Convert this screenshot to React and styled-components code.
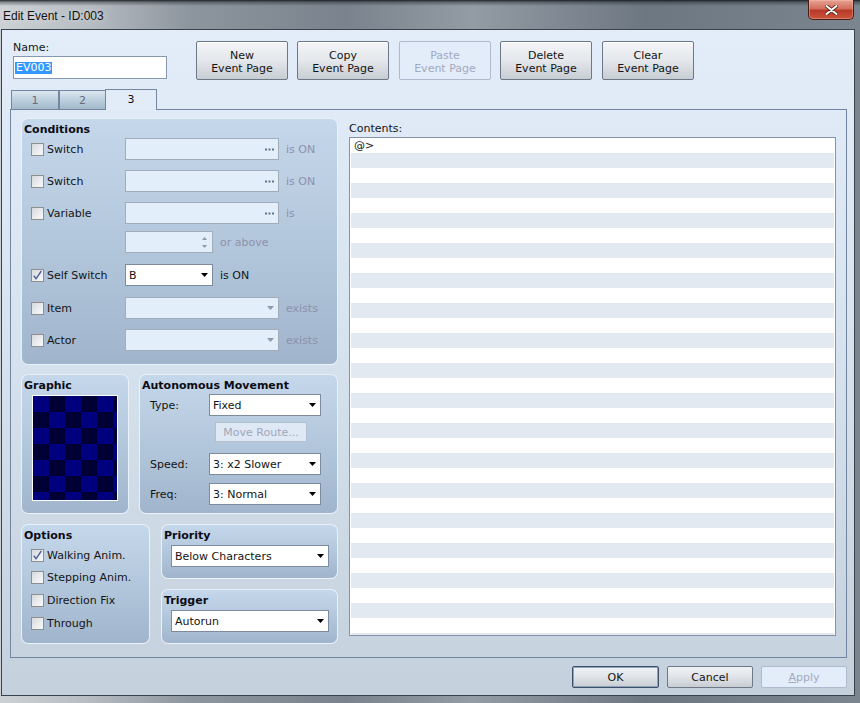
import styled, { createGlobalStyle } from "styled-components";

const GlobalStyle = createGlobalStyle`
  html, body { margin: 0; padding: 0; }
  body {
    font-family: "DejaVu Sans", Verdana, sans-serif;
    font-size: 11px;
    color: #141414;
  }
  * { box-sizing: border-box; }
`;

const Window = styled.div`
  width: 860px;
  height: 703px;
  display: flex;
  flex-direction: column;
  overflow: hidden;
  background:
    linear-gradient(180deg, rgba(18, 22, 26, 0.9) 0, rgba(30, 36, 42, 0.45) 2px, rgba(0, 0, 0, 0) 6px),
    linear-gradient(90deg, #cdd1d5 0%, #b7bdc3 10%, #8d959e 22%, #7a838d 40%, #939ba4 55%, #6d7782 75%, #7b8590 100%);
`;

const TitleBar = styled.div`
  height: 29px;
  flex: none;
  display: flex;
  justify-content: space-between;
  align-items: flex-start;
`;

const Caption = styled.div`
  font-family: "Liberation Sans", Arial, sans-serif;
  font-size: 12px;
  line-height: 14px;
  color: #121212;
  padding: 9px 0 0 3px;
  text-shadow: 0 0 6px rgba(255, 255, 255, 0.6);
`;

const CloseButton = styled.div`
  width: 46px;
  height: 20px;
  margin-right: 6px;
  display: flex;
  align-items: center;
  justify-content: center;
  border: 1px solid #4a1d16;
  border-top: none;
  border-radius: 0 0 5px 5px;
  background: linear-gradient(180deg, #e7a393 0%, #d36e5c 45%, #b93a29 55%, #c8553c 100%);
  box-shadow: inset 0 0 0 1px rgba(255, 200, 190, 0.35);
`;

const Client = styled.div`
  flex: 1;
  margin: 0 5px 7px 1px;
  border: 1px solid #3a424c;
  background: linear-gradient(180deg, #e2edf9 0%, #d7e3ef 45%, #c4d0dc 100%);
  padding: 0 7px 0 8px;
  display: flex;
  flex-direction: column;
`;

const TopRow = styled.div`
  margin-top: 11px;
  padding-left: 3px;
  height: 39px;
  display: flex;
  align-items: flex-start;
`;

const NameBlock = styled.div`
  width: 154px;
  display: flex;
  flex-direction: column;
`;

const NameLabel = styled.div`
  line-height: 13px;
  margin-bottom: 2px;
`;

const NameInput = styled.div`
  height: 23px;
  border: 1px solid #8798ae;
  background: #fff;
  padding-left: 1px;
  display: flex;
  align-items: center;
`;

const Selected = styled.span`
  background: #3399ff;
  color: #fff;
  line-height: 12px;
  padding: 0 1px;
`;

const PageButtons = styled.div`
  margin-left: 29px;
  display: flex;
  gap: 9px;
`;

const PageButton = styled.div`
  width: 92px;
  height: 39px;
  display: flex;
  align-items: center;
  justify-content: center;
  text-align: center;
  line-height: 13px;
  border-radius: 2px;
  border: 1px solid ${(p) => (p.$disabled ? "#aebbcc" : "#6c7888")};
  background: ${(p) =>
    p.$disabled
      ? "#e2edf9"
      : "linear-gradient(180deg, #f3f5f7 0%, #e4e7eb 50%, #c8cdd3 100%)"};
  color: ${(p) => (p.$disabled ? "#a3a8c2" : "#141414")};
  box-shadow: ${(p) => (p.$disabled ? "none" : "inset 0 1px 0 #fff")};
  padding-top: 3px;

  &:nth-child(odd):not(:first-child) {
    margin-left: 1px;
  }
`;

const TabBar = styled.div`
  margin-top: 9px;
  height: 20px;
  padding-left: 1px;
  display: flex;
  align-items: flex-end;
  position: relative;
  z-index: 2;
`;

const Tab = styled.div`
  width: ${(p) => p.$w}px;
  height: ${(p) => (p.$active ? 21 : 19)}px;
  margin-bottom: ${(p) => (p.$active ? -1 : 0)}px;
  margin-left: ${(p) => (p.$active ? -1 : 0)}px;
  border: 1px solid #7487a2;
  border-bottom: none;
  display: flex;
  align-items: center;
  justify-content: center;
  padding-bottom: ${(p) => (p.$active ? 1 : 0)}px;
  color: ${(p) => (p.$active ? "#111" : "#6b6b7c")};
  background: ${(p) =>
    p.$active ? "#e1ecf8" : "linear-gradient(180deg, #dce7ef 0%, #bccfdd 50%, #a3bacb 100%)"};
`;

const TabPanel = styled.div`
  height: 549px;
  border: 1px solid #7184a0;
  padding: 8px 10px 0 10px;
  display: flex;
  gap: 11px;
  position: relative;
  z-index: 1;
`;

const LeftCol = styled.div`
  width: 317px;
  display: flex;
  flex-direction: column;
`;

const GroupRow = styled.div`
  display: flex;
  gap: ${(p) => p.$gap}px;
  margin-top: ${(p) => p.$mt}px;
`;

const Stack = styled.div`
  display: flex;
  flex-direction: column;
  gap: 10px;
`;

const Group = styled.div`
  width: ${(p) => p.$w}px;
  height: ${(p) => p.$h}px;
  border: 1px solid rgba(238, 245, 252, 0.9);
  border-radius: 7px;
  background: linear-gradient(180deg, #c5d7ea 0%, #b3c7dc 50%, #a0b5cc 100%);
  padding: 4px 0 0 2px;
  display: flex;
  flex-direction: column;
`;

const GroupTitle = styled.div`
  font-weight: bold;
  line-height: 13px;
  color: #0c0c14;
`;

const Row = styled.div`
  display: flex;
  align-items: center;
  height: ${(p) => p.$h || 22}px;
  margin-top: ${(p) => p.$mt || 0}px;
  padding-left: ${(p) => (p.$pl === undefined ? 7 : p.$pl)}px;
`;

const CheckLabel = styled.div`
  width: ${(p) => p.$w || 94}px;
  flex: none;
  display: flex;
  align-items: center;
  gap: 3px;
`;

const Box = styled.div`
  width: 13px;
  height: 13px;
  flex: none;
  border: 1px solid #8e8e8e;
  background: linear-gradient(135deg, #d6d9dc 0%, #eceef0 60%, #f7f8f9 100%);
  display: flex;
  align-items: center;
  justify-content: center;
`;

const FieldLabel = styled.div`
  width: ${(p) => p.$w}px;
  flex: none;
`;

const Field = styled.div`
  width: ${(p) => p.$w}px;
  height: ${(p) => p.$h || 22}px;
  flex: none;
  display: flex;
  align-items: center;
  justify-content: space-between;
  padding: 0 4px 0 3px;
  border: 1px solid ${(p) => (p.$disabled ? "#a3adba" : "#7d8b9d")};
  background: ${(p) => (p.$disabled ? "#e2eefa" : "#fff")};
  color: #141414;
`;

const Suffix = styled.span`
  margin-left: 7px;
  color: ${(p) => (p.$disabled ? "#8f90ad" : "#141414")};
`;

const SpinArrows = styled.div`
  display: flex;
  flex-direction: column;
  gap: 5px;
  margin-right: 1px;
`;

const MoveRouteButton = styled.div`
  width: 92px;
  height: 20px;
  margin-left: 6px;
  display: flex;
  align-items: center;
  justify-content: center;
  border: 1px solid #b1bfd0;
  background: #dfe9f5;
  color: #9ea7ba;
`;

const Picture = styled.div`
  width: 86px;
  height: 106px;
  margin: 3px 0 0 8px;
  border: 1px solid #fff;
  background: repeating-conic-gradient(#000034 0 25%, #00007f 0 50%) 0 0 / 32px 32px;
`;

const RightCol = styled.div`
  flex: 1;
  display: flex;
  flex-direction: column;
  padding-top: 4px;
`;

const ContentsLabel = styled.div`
  line-height: 13px;
  margin-bottom: 2px;
`;

const ContentsBox = styled.div`
  height: 499px;
  border: 1px solid #8493a8;
  background: #fff;
  padding: 0 1px;
  overflow: hidden;
`;

const Line = styled.div`
  height: 15px;
  line-height: 15px;
  padding-left: 3px;
  background: ${(p) => (p.$alt ? "#e2e9f0" : "#fff")};
`;

const Footer = styled.div`
  margin-top: 8px;
  display: flex;
  justify-content: flex-end;
  gap: 8px;
`;

const DialogButton = styled.div`
  width: ${(p) => p.$w}px;
  height: 22px;
  display: flex;
  align-items: center;
  justify-content: center;
  border-radius: 2px;
  border: 1px solid ${(p) => (p.$default ? "#3c4e68" : p.$disabled ? "#aebbcc" : "#6c7888")};
  background: ${(p) =>
    p.$disabled ? "#e2edf9" : "linear-gradient(180deg, #f0f2f5 0%, #e0e4e8 50%, #c8cdd3 100%)"};
  color: ${(p) => (p.$disabled ? "#a3a8c2" : "#141414")};
  box-shadow: ${(p) => (p.$default ? "inset 0 0 0 1px #8ea3bc" : "none")};

  u {
    text-decoration: underline;
  }
`;

function Check({ checked }) {
  return (
    <Box>
      {checked && (
        <svg width="11" height="11" viewBox="0 0 11 11">
          <path d="M1.8 5.8 L4 8.8 L9.3 1" fill="none" stroke="#52649a" strokeWidth="1.5" />
        </svg>
      )}
    </Box>
  );
}

function DownArrow({ color }) {
  return (
    <svg width="7" height="4" viewBox="0 0 7 4">
      <path d="M0 0H7L3.5 4Z" fill={color} />
    </svg>
  );
}

function Dots() {
  return (
    <svg width="9" height="3" viewBox="0 0 9 3">
      <rect x="0" y="0.5" width="2" height="2" fill="#66728a" />
      <rect x="3.5" y="0.5" width="2" height="2" fill="#66728a" />
      <rect x="7" y="0.5" width="2" height="2" fill="#66728a" />
    </svg>
  );
}

function Select({ w, value, disabled }) {
  return (
    <Field $w={w} $disabled={disabled}>
      <span>{value}</span>
      <DownArrow color={disabled ? "#8e99ad" : "#000"} />
    </Field>
  );
}

const pageButtons = [
  ["New", false],
  ["Copy", false],
  ["Paste", true],
  ["Delete", false],
  ["Clear", false],
];

const options = [
  ["Walking Anim.", true],
  ["Stepping Anim.", false],
  ["Direction Fix", false],
  ["Through", false],
];

export default function App() {
  const lines = Array.from({ length: 34 }, (_, i) => i);

  return (
    <>
      <GlobalStyle />
      <Window>
        <TitleBar>
          <Caption>Edit Event - ID:003</Caption>
          <CloseButton>
            <svg width="13" height="10" viewBox="0 0 13 10">
              <path d="M1.5 1 L11.5 9 M11.5 1 L1.5 9" stroke="#5a2218" strokeWidth="3.6" strokeLinecap="round" />
              <path d="M1.5 1 L11.5 9 M11.5 1 L1.5 9" stroke="#fff" strokeWidth="2" strokeLinecap="round" />
            </svg>
          </CloseButton>
        </TitleBar>

        <Client>
          <TopRow>
            <NameBlock>
              <NameLabel>Name:</NameLabel>
              <NameInput>
                <Selected>EV003</Selected>
              </NameInput>
            </NameBlock>
            <PageButtons>
              {pageButtons.map(([word, disabled]) => (
                <PageButton key={word} $disabled={disabled}>
                  {word}
                  <br />
                  Event Page
                </PageButton>
              ))}
            </PageButtons>
          </TopRow>

          <TabBar>
            <Tab $w={48}>1</Tab>
            <Tab $w={47}>2</Tab>
            <Tab $w={52} $active>
              3
            </Tab>
          </TabBar>

          <TabPanel>
            <LeftCol>
              <Group $w={317} $h={247}>
                <GroupTitle>Conditions</GroupTitle>
                <Row $mt={2}>
                  <CheckLabel>
                    <Check />
                    Switch
                  </CheckLabel>
                  <Field $w={154} $disabled>
                    <span />
                    <Dots />
                  </Field>
                  <Suffix $disabled>is ON</Suffix>
                </Row>
                <Row $mt={10}>
                  <CheckLabel>
                    <Check />
                    Switch
                  </CheckLabel>
                  <Field $w={154} $disabled>
                    <span />
                    <Dots />
                  </Field>
                  <Suffix $disabled>is ON</Suffix>
                </Row>
                <Row $mt={10}>
                  <CheckLabel>
                    <Check />
                    Variable
                  </CheckLabel>
                  <Field $w={154} $disabled>
                    <span />
                    <Dots />
                  </Field>
                  <Suffix $disabled>is</Suffix>
                </Row>
                <Row $mt={7}>
                  <CheckLabel />
                  <Field $w={88} $disabled>
                    <span />
                    <SpinArrows>
                      <svg width="5" height="3" viewBox="0 0 5 3">
                        <path d="M0 3H5L2.5 0Z" fill="#8e99ad" />
                      </svg>
                      <svg width="5" height="3" viewBox="0 0 5 3">
                        <path d="M0 0H5L2.5 3Z" fill="#8e99ad" />
                      </svg>
                    </SpinArrows>
                  </Field>
                  <Suffix $disabled>or above</Suffix>
                </Row>
                <Row $mt={11}>
                  <CheckLabel>
                    <Check checked />
                    Self Switch
                  </CheckLabel>
                  <Select w={88} value="B" />
                  <Suffix>is ON</Suffix>
                </Row>
                <Row $mt={11}>
                  <CheckLabel>
                    <Check />
                    Item
                  </CheckLabel>
                  <Select w={154} value="" disabled />
                  <Suffix $disabled>exists</Suffix>
                </Row>
                <Row $mt={10}>
                  <CheckLabel>
                    <Check />
                    Actor
                  </CheckLabel>
                  <Select w={154} value="" disabled />
                  <Suffix $disabled>exists</Suffix>
                </Row>
              </Group>

              <GroupRow $gap={10} $mt={9}>
                <Group $w={108} $h={140}>
                  <GroupTitle>Graphic</GroupTitle>
                  <Picture />
                </Group>
                <Group $w={199} $h={140}>
                  <GroupTitle>Autonomous Movement</GroupTitle>
                  <Row $mt={2} $pl={8}>
                    <FieldLabel $w={59}>Type:</FieldLabel>
                    <Select w={112} value="Fixed" />
                  </Row>
                  <Row $mt={6} $pl={8} $h={20}>
                    <FieldLabel $w={59} />
                    <MoveRouteButton>Move Route...</MoveRouteButton>
                  </Row>
                  <Row $mt={11} $pl={8}>
                    <FieldLabel $w={59}>Speed:</FieldLabel>
                    <Select w={112} value="3: x2 Slower" />
                  </Row>
                  <Row $mt={8} $pl={8}>
                    <FieldLabel $w={59}>Freq:</FieldLabel>
                    <Select w={112} value="3: Normal" />
                  </Row>
                </Group>
              </GroupRow>

              <GroupRow $gap={11} $mt={10}>
                <Group $w={129} $h={120}>
                  <GroupTitle>Options</GroupTitle>
                  {options.map(([label, checked], i) => (
                    <Row key={label} $h={i === 0 ? 22 : 23} $mt={i === 0 ? 2 : 0}>
                      <CheckLabel $w={118}>
                        <Check checked={checked} />
                        {label}
                      </CheckLabel>
                    </Row>
                  ))}
                </Group>
                <Stack>
                  <Group $w={177} $h={55}>
                    <GroupTitle>Priority</GroupTitle>
                    <Row $mt={3} $pl={7}>
                      <Select w={158} value="Below Characters" />
                    </Row>
                  </Group>
                  <Group $w={177} $h={55}>
                    <GroupTitle>Trigger</GroupTitle>
                    <Row $mt={3} $pl={7}>
                      <Select w={158} value="Autorun" />
                    </Row>
                  </Group>
                </Stack>
              </GroupRow>
            </LeftCol>

            <RightCol>
              <ContentsLabel>Contents:</ContentsLabel>
              <ContentsBox>
                {lines.map((i) => (
                  <Line key={i} $alt={i % 2 === 1}>
                    {i === 0 ? "@>" : ""}
                  </Line>
                ))}
              </ContentsBox>
            </RightCol>
          </TabPanel>

          <Footer>
            <DialogButton $w={87} $default>
              OK
            </DialogButton>
            <DialogButton $w={86}>Cancel</DialogButton>
            <DialogButton $w={86} $disabled>
              <span>
                <u>A</u>pply
              </span>
            </DialogButton>
          </Footer>
        </Client>
      </Window>
    </>
  );
}
